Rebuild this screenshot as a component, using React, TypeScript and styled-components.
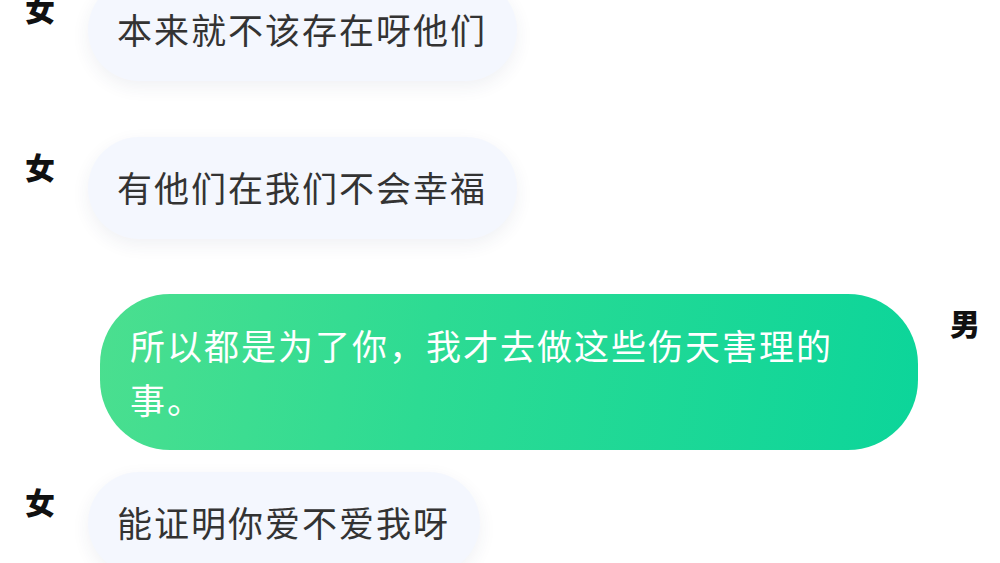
import React from 'react';
import styled, { createGlobalStyle, css } from 'styled-components';

const GlobalStyle = createGlobalStyle`
  html, body {
    margin: 0;
    padding: 0;
    background: #fff;
    overflow: hidden;
  }
  body {
    font-family: "Noto Sans CJK SC", "Noto Sans", sans-serif;
  }
`;

const Chat = styled.div`
  width: 1000px;
  height: 563px;
  overflow: hidden;
  display: flex;
  flex-direction: column;
`;

const Row = styled.div<{ $mine?: boolean; $top: number }>`
  display: flex;
  align-items: flex-start;
  margin-top: ${(p) => p.$top}px;
  ${(p) =>
    p.$mine
      ? css`
          flex-direction: row-reverse;
          padding-right: 22px;
          gap: 32px;
        `
      : css`
          padding-left: 25px;
          gap: 35px;
        `}
`;

const Who = styled.div<{ $mine?: boolean }>`
  font-family: "Noto Sans CJK SC", sans-serif;
  font-weight: 900;
  font-size: 30px;
  line-height: 32px;
  color: #111;
  margin-top: ${(p) => (p.$mine ? 12 : 13)}px;
  width: 28px;
  text-align: center;
`;

const Bubble = styled.div<{ $mine?: boolean }>`
  font-size: 35px;
  letter-spacing: 2px;
  ${(p) =>
    p.$mine
      ? css`
          width: 760px;
          padding: 24px 28px 24px 30px;
          line-height: 54px;
          color: #fff;
          border-radius: 70px;
          background: linear-gradient(100deg, #4bdf8f 0%, #2ddb93 40%, #0cd59a 100%);
        `
      : css`
          padding: 32px 30px 34px 29px;
          line-height: 36px;
          color: #333;
          border-radius: 52px;
          background: #f4f7fe;
          box-shadow: 0 6px 18px rgba(40, 60, 100, 0.07);
        `}
`;

const messages = [
  { mine: false, top: -21, text: '本来就不该存在呀他们' },
  { mine: false, top: 56, text: '有他们在我们不会幸福' },
  { mine: true, top: 55, text: '所以都是为了你，我才去做这些伤天害理的事。' },
  { mine: false, top: 22, text: '能证明你爱不爱我呀' },
];

export default function App() {
  return (
    <>
      <GlobalStyle />
      <Chat>
        {messages.map((m, i) => (
          <Row key={i} $mine={m.mine} $top={m.top}>
            <Who $mine={m.mine}>{m.mine ? '男' : '女'}</Who>
            <Bubble $mine={m.mine}>{m.text}</Bubble>
          </Row>
        ))}
      </Chat>
    </>
  );
}
